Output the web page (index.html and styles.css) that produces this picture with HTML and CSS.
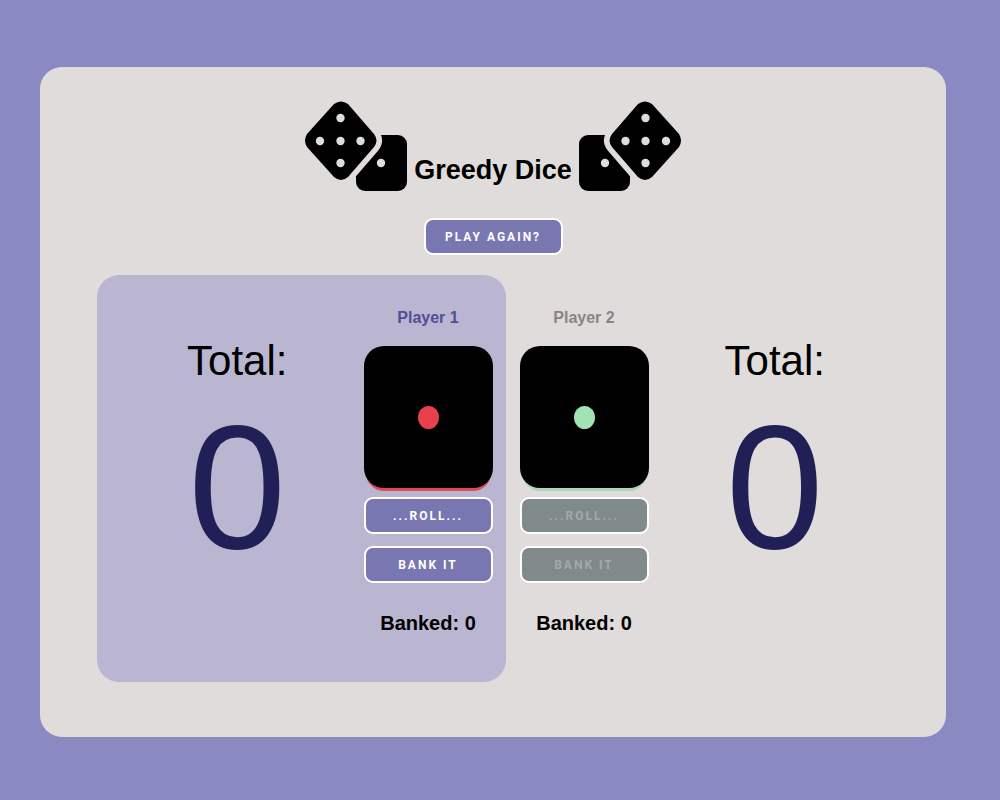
FILE: index.html
```html
<!DOCTYPE html>
<html lang="en">
<head>
<meta charset="utf-8">
<meta name="viewport" content="width=device-width, initial-scale=1">
<title>Greedy Dice</title>
<link rel="stylesheet" href="styles.css">
</head>
<body>
<svg class="defs" aria-hidden="true">
  <symbol id="dice" viewBox="0 0 102 90">
    <rect x="51" y="34" width="51" height="56" rx="9"/>
    <circle class="pip" cx="76" cy="62" r="4.2"/>
    <path class="front-die" d="M29 3Q36 -2 43 3L69 33Q74 39.500 69 46L43 76Q36 82 29 76L2 46Q-2 39.500 2 33Z"/>
    <g class="pip">
      <circle cx="35.500" cy="17" r="4.200"/>
      <circle cx="15" cy="40" r="4.200"/>
      <circle cx="35.500" cy="40" r="4.200"/>
      <circle cx="55.500" cy="40" r="4.200"/>
      <circle cx="35.500" cy="62" r="4.200"/>
    </g>
  </symbol>
</svg>
<main class="card">
  <header class="header">
    <svg class="logo" aria-hidden="true"><use href="#dice"/></svg>
    <h1 class="title">Greedy Dice</h1>
    <svg class="logo mirrored" aria-hidden="true"><use href="#dice"/></svg>
  </header>
  <button class="button again" type="button">Play again?</button>
  <div class="players">
    <section class="player active">
      <div class="total">
        <p class="total-label">Total:</p>
        <p class="total-value">0</p>
      </div>
      <div class="controls">
        <h2 class="name">Player 1</h2>
        <div class="die red"><span class="dot"></span></div>
        <button class="button" type="button">...Roll...</button>
        <button class="button" type="button">Bank it</button>
        <p class="banked">Banked: 0</p>
      </div>
    </section>
    <section class="player reverse">
      <div class="total">
        <p class="total-label">Total:</p>
        <p class="total-value">0</p>
      </div>
      <div class="controls">
        <h2 class="name">Player 2</h2>
        <div class="die green"><span class="dot"></span></div>
        <button class="button" type="button" disabled>...Roll...</button>
        <button class="button" type="button" disabled>Bank it</button>
        <p class="banked">Banked: 0</p>
      </div>
    </section>
  </div>
</main>
</body>
</html>
```

FILE: styles.css
```css
* {
  box-sizing: border-box;
}

body {
  margin: 0;
  min-height: 100vh;
  padding: 67px 54px 63px 40px;
  background: #8b89c2;
  color: #000;
  font-family: "Liberation Sans", Arial, sans-serif;
}

h1, h2, p {
  margin: 0;
}

.defs {
  position: absolute;
  width: 0;
  height: 0;
}

.card {
  display: flex;
  flex-direction: column;
  align-items: center;
  padding: 34px 0 55px;
  border-radius: 22px;
  background: #dfdcdb;
}

.header {
  display: flex;
  align-items: flex-end;
  gap: 7px;
}

.logo {
  width: 102px;
  height: 90px;
  overflow: visible;
}

.mirrored {
  transform: scaleX(-1);
}

.pip {
  fill: #dfdcdb;
}

.front-die {
  stroke: #dfdcdb;
  stroke-width: 11px;
  paint-order: stroke;
}

.title {
  margin-bottom: 5px;
  font-size: 27px;
  line-height: 32px;
}

.button {
  height: 37px;
  padding: 0;
  border: 2px solid #fff;
  border-radius: 9px;
  background: #7877b1;
  color: #fff;
  font: bold 12px Roboto, "Liberation Sans", sans-serif;
  letter-spacing: 2px;
  text-transform: uppercase;
  cursor: pointer;
}

.button:disabled {
  background: #808a8a;
  color: #a3a9a9;
  cursor: default;
}

.again {
  width: 139px;
  margin: 27px 0 20px;
}

.players {
  display: flex;
  align-self: stretch;
  padding: 0 31px 0 57px;
}

.player {
  display: flex;
  flex: 1;
  padding: 31px 14px 47px;
  border-radius: 22px;
}

.active {
  padding-right: 13px;
  background: #bab6d1;
}

.reverse {
  flex-direction: row-reverse;
}

.total {
  flex: 1;
  padding-top: 31px;
  text-align: center;
}

.total-label {
  font-size: 42px;
  line-height: 48px;
}

.total-value {
  margin-top: 14px;
  color: #201f56;
  font-size: 176px;
  line-height: 176px;
}

.controls {
  display: flex;
  flex-direction: column;
  width: 129px;
  gap: 12px;
  text-align: center;
}

.name {
  margin-bottom: 4px;
  color: #8a8585;
  font-size: 16px;
  line-height: 24px;
}

.active .name {
  color: #524d97;
}

.die {
  display: grid;
  place-items: center;
  height: 142px;
  margin-bottom: -3px;
  border-radius: 20px;
  background: #000;
}

.dot {
  width: 21px;
  height: 23px;
  border-radius: 50%;
}

.red {
  box-shadow: 0 5px 0 -2px #df4a59;
}

.red .dot {
  background: #e8404e;
}

.green {
  box-shadow: 0 5px 0 -2px #a8dcb7;
}

.green .dot {
  background: #a2e3b3;
}

.banked {
  margin-top: 16px;
  font-size: 20px;
  font-weight: bold;
  line-height: 24px;
}
```
